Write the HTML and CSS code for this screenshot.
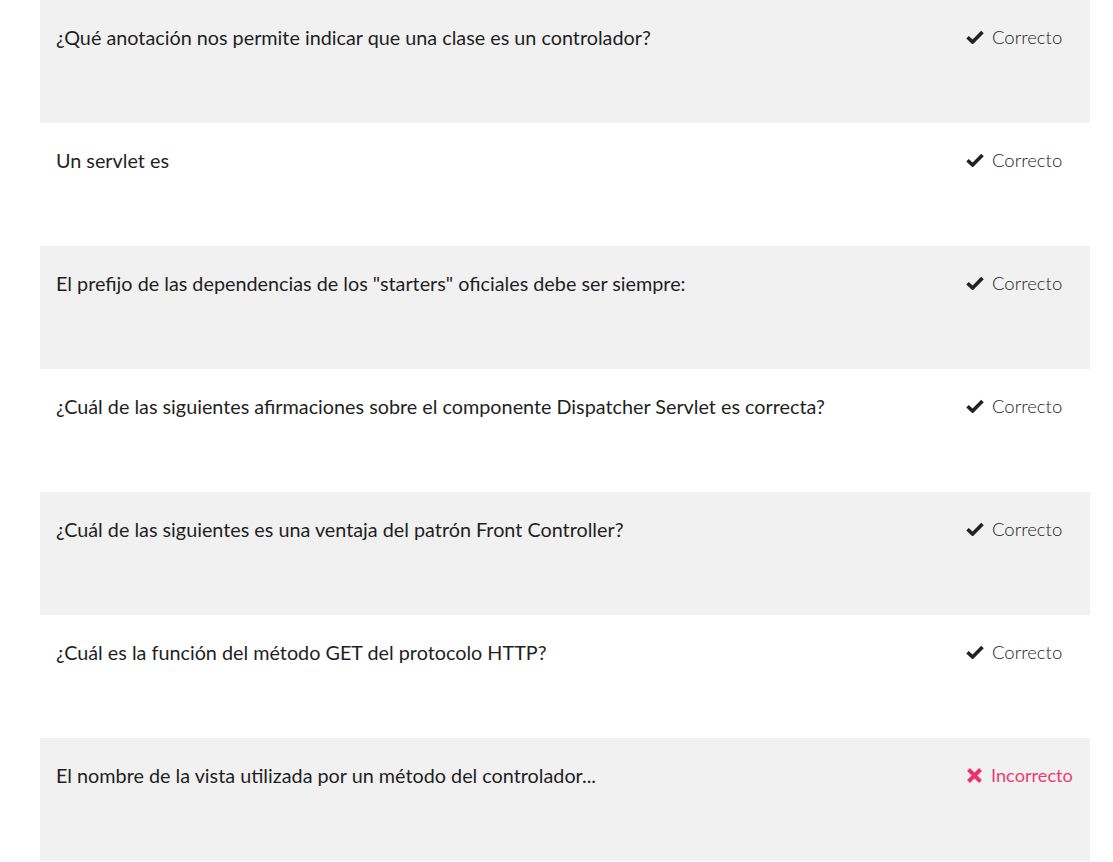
FILE: index.html
```html
<!DOCTYPE html>
<html lang="es">
<head>
<meta charset="utf-8">
<link rel="stylesheet" href="styles.css">
</head>
<body>
<ul class="results">
  <li class="row grey">
    <span class="question">¿Qué anotación nos permite indicar que una clase es un controlador?</span>
    <span class="status ok"><svg class="icon" viewBox="0 0 18 14"><path d="M1.5 7.2 L6.6 12 L16.5 2"/></svg>Correcto</span>
  </li>
  <li class="row">
    <span class="question">Un servlet es</span>
    <span class="status ok"><svg class="icon" viewBox="0 0 18 14"><path d="M1.5 7.2 L6.6 12 L16.5 2"/></svg>Correcto</span>
  </li>
  <li class="row grey">
    <span class="question">El prefijo de las dependencias de los "starters" oficiales debe ser siempre:</span>
    <span class="status ok"><svg class="icon" viewBox="0 0 18 14"><path d="M1.5 7.2 L6.6 12 L16.5 2"/></svg>Correcto</span>
  </li>
  <li class="row">
    <span class="question">¿Cuál de las siguientes afirmaciones sobre el componente Dispatcher Servlet es correcta?</span>
    <span class="status ok"><svg class="icon" viewBox="0 0 18 14"><path d="M1.5 7.2 L6.6 12 L16.5 2"/></svg>Correcto</span>
  </li>
  <li class="row grey">
    <span class="question">¿Cuál de las siguientes es una ventaja del patrón Front Controller?</span>
    <span class="status ok"><svg class="icon" viewBox="0 0 18 14"><path d="M1.5 7.2 L6.6 12 L16.5 2"/></svg>Correcto</span>
  </li>
  <li class="row">
    <span class="question">¿Cuál es la función del método GET del protocolo HTTP?</span>
    <span class="status ok"><svg class="icon" viewBox="0 0 18 14"><path d="M1.5 7.2 L6.6 12 L16.5 2"/></svg>Correcto</span>
  </li>
  <li class="row grey">
    <span class="question">El nombre de la vista utilizada por un método del controlador...</span>
    <span class="status bad"><svg class="icon x" viewBox="0 0 17 17"><path d="M2.5 2.5 L14.5 14.5 M14.5 2.5 L2.5 14.5"/></svg>Incorrecto</span>
  </li>
</ul>
</body>
</html>
```

FILE: styles.css
```css
html, body {
  margin: 0;
  padding: 0;
  background: #ffffff;
}

body {
  font-family: Lato, "Liberation Sans", sans-serif;
  color: #222;
}

.results {
  list-style: none;
  margin: 0;
  padding: 0 23px 0 40px;
}

.row {
  height: 123px;
  box-sizing: border-box;
  padding: 25px 0 0 16px;
  display: flex;
  justify-content: space-between;
  align-items: flex-start;
}

.row.grey {
  background: #f1f1f1;
}

.question {
  font-size: 19.8px;
  line-height: 24px;
  color: #1f1f1f;
}

.status {
  display: flex;
  align-items: center;
  width: 124px;
  font-size: 18.5px;
  line-height: 24px;
  font-weight: 300;
}

.status.ok {
  color: #222;
}

.status.bad {
  color: #ec3b72;
  font-weight: 400;
  font-size: 18.2px;
}

.icon {
  flex: none;
  width: 18px;
  height: 14px;
  margin-right: 8px;
  fill: none;
  stroke: #222;
  stroke-width: 3.6;
  stroke-linecap: butt;
  stroke-linejoin: miter;
}

.icon.x {
  width: 17px;
  height: 17px;
  stroke: #f0306e;
  stroke-width: 4;
}
```
